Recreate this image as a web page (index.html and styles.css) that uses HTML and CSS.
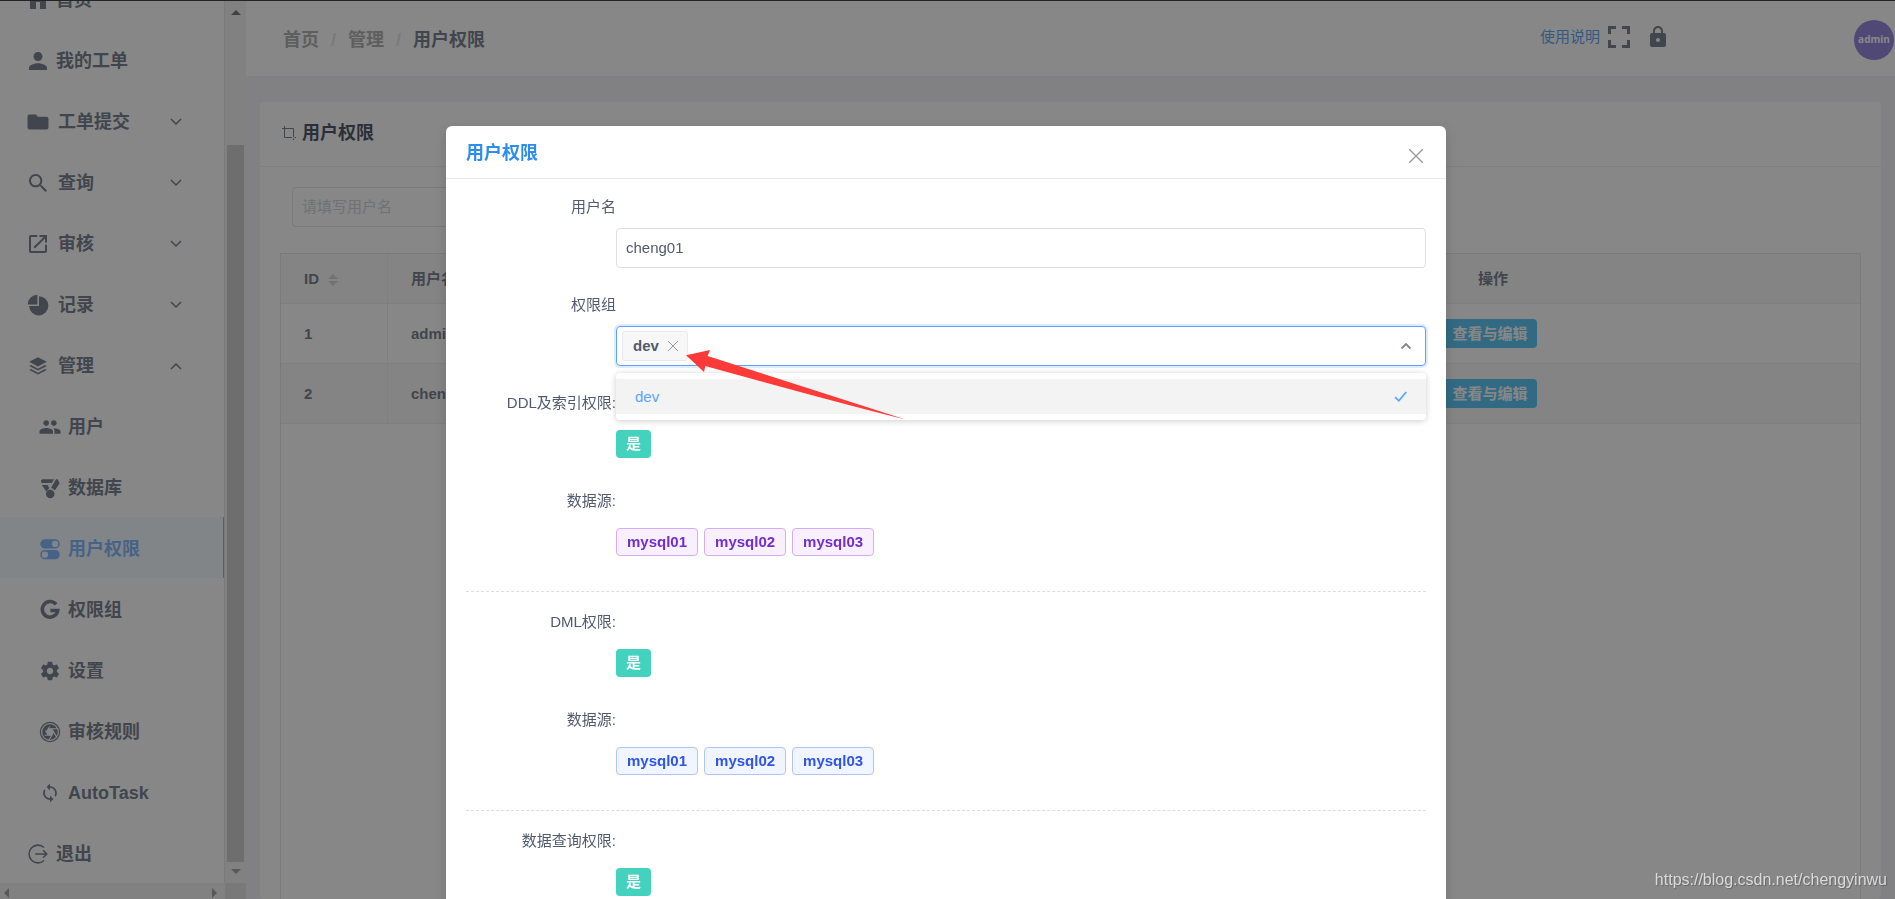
FILE: index.html
```html
<!DOCTYPE html>
<html lang="zh-CN">
<head>
<meta charset="utf-8">
<title>用户权限</title>
<link rel="stylesheet" href="styles.css">
</head>
<body>
<div class="app">
  <aside class="sidebar">
    <div class="sidebar-view">
      <nav class="menu">
        <a class="item" href="#"><svg viewBox="0 0 24 24"><path d="M10 21v-7h4v7h6v-9h3L12 2 1 12h3v9z"/></svg><span>首页</span></a>
        <a class="item" href="#"><svg viewBox="0 0 512 512"><path d="M256 256c52.805 0 96-43.201 96-96s-43.195-96-96-96-96 43.201-96 96 43.195 96 96 96zm0 48c-63.598 0-192 32.402-192 96v48h384v-48c0-63.598-128.402-96-192-96z"/></svg><span>我的工单</span></a>
        <button class="item group" type="button"><svg viewBox="0 0 512 512"><path d="M213.338 96H74.666C51.197 96 32 115.198 32 138.667v234.666C32 396.802 51.197 416 74.666 416h362.668C460.803 416 480 396.802 480 373.333V186.667C480 163.198 460.803 144 437.334 144H256.006l-42.668-48z"/></svg><span>工单提交</span><svg class="chev" viewBox="0 0 12 12"><path d="M1 3l5 5 5-5"/></svg></button>
        <button class="item group" type="button"><svg viewBox="0 0 512 512"><path d="M337.509 305.372h-17.501l-6.571-5.486c20.791-25.232 33.922-57.054 33.922-93.257C347.358 127.632 283.896 64 205.135 64 127.452 64 64 127.632 64 206.629s63.452 142.628 142.225 142.628c35.011 0 67.831-13.167 92.991-34.008l6.561 5.487v17.551L415.18 448 448 415.086 337.509 305.372zm-131.284 0c-54.702 0-98.463-43.887-98.463-98.743 0-54.858 43.761-98.742 98.463-98.742 54.7 0 98.462 43.884 98.462 98.742 0 54.856-43.762 98.743-98.462 98.743z"/></svg><span>查询</span><svg class="chev" viewBox="0 0 12 12"><path d="M1 3l5 5 5-5"/></svg></button>
        <button class="item group" type="button"><svg viewBox="0 0 512 512"><path d="M405.34 405.332H106.66V106.668H240V64H106.66C83.191 64 64 83.197 64 106.668v298.664C64 428.803 83.191 448 106.66 448h298.68c23.469 0 42.66-19.197 42.66-42.668V272h-42.66v133.332zM288 64v42.668h87.474L159.999 322.133l29.866 29.866 215.476-215.47V224H448V64H288z"/></svg><span>审核</span><svg class="chev" viewBox="0 0 12 12"><path d="M1 3l5 5 5-5"/></svg></button>
        <button class="item group" type="button"><svg viewBox="0 0 24 24"><path d="M13 3.200A9.600 9.600 0 1 1 3.200 13H13z"/><path d="M11.400 1.800v9.600H1.800a9.600 9.600 0 0 1 9.600-9.600z"/></svg><span>记录</span><svg class="chev" viewBox="0 0 12 12"><path d="M1 3l5 5 5-5"/></svg></button>
        <button class="item group" type="button"><svg viewBox="-1 -1 26 26"><path d="M12 2.500L2.500 7.500l9.500 5 9.500-5z"/><path d="M2.500 12l2-1.100L12 14.900l7.500-4 2 1.100-9.500 5zM2.500 16.300l2-1.100 7.500 4 7.500-4 2 1.100-9.500 5z"/></svg><span>管理</span><svg class="chev" viewBox="0 0 12 12"><path d="M1 9l5-5 5 5"/></svg></button>
        <a class="item sub" href="#"><svg viewBox="0 0 512 512"><path d="M337.454 232c33.599 0 61.092-27.002 61.092-60 0-32.997-27.493-60-61.092-60s-61.090 27.003-61.090 60c0 32.998 27.491 60 61.090 60zm-162.908 0c33.599 0 61.090-27.002 61.090-60 0-32.997-27.491-60-61.090-60s-61.092 27.003-61.092 60c0 32.998 27.493 60 61.092 60zm0 44C126.688 276 32 298.998 32 346v54h288v-54c0-47.002-97.599-70-145.454-70zm162.908 11.003c-6.105 0-10.325 0-17.454.997 23.426 17.002 32 28 32 58v54h128v-54c0-47.002-94.688-58.997-142.546-58.997z"/></svg><span>用户</span></a>
        <a class="item sub" href="#"><svg viewBox="-1 -1 26 26"><path d="M3.800 2.600h12.700l-2.600 4H3c-1.300-1.300-.8-3.700.8-4zM18.400 2.600h2l2 4.200-5 7.600-4.200-2.600zM3 8.800h6.600l1.600 3.200-3 4z"/><circle cx="12.300" cy="18.400" r="4.600"/></svg><span>数据库</span></a>
        <a class="item sub active" href="#"><svg viewBox="-1 -1 26 26"><path fill-rule="evenodd" d="M6.500 1.500h11a5 5 0 0 1 0 10h-11a5 5 0 0 1 0-10zm11 1.600a3.400 3.400 0 1 0 0 6.800 3.400 3.400 0 0 0 0-6.800zM6.500 13.100h11a5 5 0 0 1 0 10h-11a5 5 0 0 1 0-10zm0 1.600a3.400 3.400 0 1 0 0 6.800 3.400 3.400 0 0 0 0-6.800z"/></svg><span>用户权限</span></a>
        <a class="item sub" href="#"><svg class="line" viewBox="-1 -1 26 26"><path d="M18.600 6A8.400 8.400 0 1 0 20.400 12.500h-8" stroke-width="3.800"/></svg><span>权限组</span></a>
        <a class="item sub" href="#"><svg viewBox="-1 -1 26 26"><path d="M19.430 12.980c.04-.32.07-.64.07-.98s-.03-.66-.07-.98l2.110-1.650c.19-.15.24-.42.12-.64l-2-3.460c-.12-.22-.39-.3-.61-.22l-2.490 1c-.52-.4-1.080-.73-1.690-.98l-.38-2.650C14.460 2.180 14.250 2 14 2h-4c-.25 0-.46.18-.49.42l-.38 2.650c-.61.25-1.170.59-1.690.98l-2.490-1c-.23-.09-.49 0-.61.22l-2 3.460c-.13.22-.07.49.12.64l2.110 1.650c-.04.32-.07.65-.07.98s.03.66.07.98l-2.110 1.650c-.19.15-.24.42-.12.64l2 3.460c.12.22.39.3.61.22l2.490-1c.52.4 1.080.73 1.690.98l.38 2.650c.03.24.24.42.49.42h4c.25 0 .46-.18.49-.42l.38-2.650c.61-.25 1.170-.59 1.690-.98l2.490 1c.23.09.49 0 .61-.22l2-3.460c.12-.22.07-.49-.12-.64l-2.110-1.650zM12 15.500c-1.930 0-3.500-1.570-3.500-3.500s1.570-3.500 3.500-3.500 3.500 1.570 3.500 3.500-1.570 3.500-3.500 3.500z"/></svg><span>设置</span></a>
        <a class="item sub" href="#"><svg viewBox="-1 -1 26 26"><circle cx="12" cy="12" r="10.400" fill="none" stroke="currentColor" stroke-width="1.300"/><circle cx="12" cy="12" r="8.400"/><path class="cut-fill" d="M16 12l-2 3.460h-4L8 12l2-3.460h4z"/><path class="cut" d="M10 8.540h11M14 8.540L19.500 18.070M16 12L10.500 21.530M14 15.460H3M10 15.460L4.500 5.930M8 12l5.500-9.530"/></svg><span>审核规则</span></a>
        <a class="item sub" href="#"><svg viewBox="-2 -2 28 28"><path d="M12 4V1L8 5l4 4V6c3.310 0 6 2.690 6 6 0 1.010-.25 1.970-.7 2.800l1.460 1.460C19.540 15.030 20 13.570 20 12c0-4.420-3.580-8-8-8zm0 14c-3.310 0-6-2.690-6-6 0-1.010.25-1.970.7-2.800L5.240 7.740C4.460 8.970 4 10.430 4 12c0 4.420 3.580 8 8 8v3l4-4-4-4v3z"/></svg><span>AutoTask</span></a>
        <a class="item" href="#"><svg class="line" viewBox="-1 -1 26 26"><path d="M18.500 5A9.600 9.600 0 1 0 18.500 19M9 12h12.500M17.500 8l4 4-4 4" stroke-width="1.700"/></svg><span>退出</span></a>
      </nav>
    </div>
    <div class="vbar"><i class="arr up"></i><i class="thumb"></i><i class="arr down"></i></div>
    <div class="hbar"><i class="arr left"></i><i class="arr right"></i></div>
    <div class="corner"></div>
  </aside>

  <main class="main">
    <header class="topbar">
      <nav class="crumbs"><a href="#">首页</a><i>/</i><a href="#">管理</a><i>/</i><span>用户权限</span></nav>
      <div class="tools">
        <a href="#">使用说明</a>
        <button type="button" aria-label="全屏"><svg viewBox="0 0 24 24"><path d="M1 1h8v3H4v5H1zM15 1h8v8h-3V4h-5zM1 15h3v5h5v3H1zM20 15h3v8h-8v-3h5z"/></svg></button>
        <button type="button" aria-label="锁屏"><svg class="lock" viewBox="0 0 24 24"><path d="M18 8h-1V6c0-2.760-2.240-5-5-5S7 3.240 7 6v2H6c-1.100 0-2 .9-2 2v10c0 1.100.9 2 2 2h12c1.100 0 2-.9 2-2V10c0-1.100-.9-2-2-2zm-6 9c-1.100 0-2-.9-2-2s.9-2 2-2 2 .9 2 2-.9 2-2 2zm3.100-9H8.900V6c0-1.710 1.390-3.100 3.100-3.100s3.100 1.390 3.100 3.100v2z"/></svg></button>
      </div>
      <span class="avatar">admin</span>
    </header>
    <section class="card">
      <h2><svg viewBox="0 0 14 14"><path d="M0 2.500h11.500V11M2.500 0v11.500H10M11.500 12.500V14M12.500 11.500H14"/></svg>用户权限</h2>
      <div class="card-body">
        <input class="search" type="text" placeholder="请填写用户名" aria-label="用户名搜索">
        <div class="table-box">
          <table>
            <colgroup><col class="c-id"><col><col class="c-act"></colgroup>
            <thead><tr><th>ID <span class="sort"><i class="arr up"></i><i class="arr down"></i></span></th><th>用户名</th><th class="act">操作</th></tr></thead>
            <tbody>
              <tr><td>1</td><td>admin</td><td class="act"><button type="button">查看与编辑</button></td></tr>
              <tr class="even"><td>2</td><td>cheng01</td><td class="act"><button type="button">查看与编辑</button></td></tr>
            </tbody>
          </table>
        </div>
      </div>
    </section>
  </main>
</div>

<div class="mask">
  <div class="modal" role="dialog" aria-labelledby="dlg-title">
    <header class="modal-head">
      <h3 id="dlg-title">用户权限</h3>
      <button type="button" aria-label="关闭"><svg viewBox="0 0 14 14"><path d="M0 0l14 14M14 0L0 14"/></svg></button>
    </header>
    <form class="modal-body">
      <div class="field"><label for="uname">用户名</label><div class="ctl"><input id="uname" type="text" value="cheng01"></div></div>
      <div class="field"><label for="grp">权限组</label>
        <div class="ctl">
          <div class="select">
            <span class="chip">dev<button type="button" aria-label="移除 dev"><svg viewBox="0 0 10 10"><path d="M0 0l10 10M10 0L0 10"/></svg></button></span>
            <input id="grp" type="text" role="combobox" aria-expanded="true" aria-controls="grp-list">
            <svg class="caret" viewBox="0 0 12 12"><path d="M1.500 8.500L6 4l4.500 4.500"/></svg>
            <div class="dropdown" id="grp-list" role="listbox">
              <div class="option" role="option" aria-selected="true">dev<svg viewBox="0 0 12 12"><path d="M1 6.500l3.500 3.500L11.300 1.800"/></svg></div>
            </div>
            <svg class="pointer" viewBox="0 0 220 70"><path d="M0 5.300L24 0l-2.400 6L219.500 69.500Q160 55 19.300 16l-1.300 6z"/></svg>
          </div>
        </div>
      </div>
      <div class="field"><span class="label">DDL及索引权限:</span><div class="ctl"><span class="yes">是</span></div></div>
      <div class="field"><span class="label">数据源:</span><div class="ctl"><span class="tag purple">mysql01</span><span class="tag purple">mysql02</span><span class="tag purple">mysql03</span></div></div>
      <hr>
      <div class="field"><span class="label">DML权限:</span><div class="ctl"><span class="yes">是</span></div></div>
      <div class="field"><span class="label">数据源:</span><div class="ctl"><span class="tag blue">mysql01</span><span class="tag blue">mysql02</span><span class="tag blue">mysql03</span></div></div>
      <hr>
      <div class="field"><span class="label">数据查询权限:</span><div class="ctl"><span class="yes">是</span></div></div>
    </form>
  </div>
</div>
<div class="watermark">https://blog.csdn.net/chengyinwu</div>
</body>
</html>
```
FILE: styles.css
```css
* { box-sizing: border-box; }
html, body { height: 100%; margin: 0; overflow: hidden; }
body {
  border-top: 1px solid #242328;
  font: 15px/24px "Liberation Sans", "Noto Sans CJK SC", sans-serif;
  color: #515a6e;
  background: #f0f0f6;
}
a { color: inherit; text-decoration: none; }
button { font: inherit; color: inherit; background: none; border: 0; padding: 0; cursor: pointer; }
svg { fill: currentColor; flex: none; display: block; }
i { font-style: normal; }
.line, .chev, h2 svg, .modal-head svg, .chip svg, .caret, .option svg { fill: none; stroke: currentColor; }

.app { display: flex; height: 100%; }
.sidebar {
  flex: none;
  display: grid;
  grid-template: minmax(0, 1fr) 16px / 225px 21px;
  height: 100%;
}
.sidebar-view { overflow: hidden; background: #fff; border-right: 1px solid #dcdee2; }
.menu { display: flex; flex-direction: column; margin: -33px -1px 0 0; }
.item {
  flex: none;
  display: flex;
  align-items: center;
  gap: 6px;
  height: 61px;
  padding: 2px 43px 0 26px;
  font-size: 18px;
  font-weight: bold;
  text-align: left;
}
.item svg { width: 24px; height: 24px; }
.group { gap: 8px; }
.item .chev { width: 12px; height: 12px; margin-left: auto; stroke-width: 1.5; }
.sub { padding-left: 38px; }
.cut-fill { fill: #fff; }
.cut { fill: none; stroke: #fff; stroke-width: 1.2; clip-path: circle(9px at 12px 12px); }
.active { color: #5ca2ff; background: #f0faff; border-right: 2px solid #5ca2ff; }
.vbar { background: #f1f1f1; display: flex; flex-direction: column; align-items: center; padding: 9px 0; }
.thumb { flex: 1; width: 17px; background: #c1c1c1; margin: 130px 0 7px; }
.arr { width: 0; height: 0; border: 5px solid transparent; flex: none; }
.arr.up { border-top: 0; border-bottom-color: #505050; }
.arr.down { border-bottom: 0; border-top-color: #8a8a8a; }
.arr.left { border-left: 0; border-right-color: #8a8a8a; }
.arr.right { border-right: 0; border-left-color: #8a8a8a; }
.hbar { background: #f1f1f1; display: flex; align-items: center; justify-content: space-between; padding: 4px 8px 0 4px; }
.corner { background: #dcdcdc; }

.main { flex: 1; min-width: 0; display: flex; flex-direction: column; }
.topbar { flex: none; height: 75px; background: #fff; display: flex; align-items: center; padding: 2px 1px 0 37px; }
.crumbs { display: flex; font-size: 18px; font-weight: bold; }
.crumbs a { color: #999; }
.crumbs i { width: 29px; text-align: center; color: #dcdee2; }
.tools { display: flex; align-items: center; gap: 7px; margin: 0 184px 5px auto; }
.tools a { color: #2d8cf0; }
.tools svg { width: 24px; height: 24px; }
.tools button + button { margin-left: 8px; }
.tools .lock { width: 24px; height: 24px; }
.avatar {
  width: 40px; height: 40px; border-radius: 50%;
  background: #7865d3; color: #fff;
  font: bold 10px/38px "Open Sans", sans-serif;
  text-align: center;
}
.card { flex: 1; margin: 26px 14px 0; background: #fff; border-radius: 4px; display: flex; flex-direction: column; }
.card h2 {
  flex: none;
  margin: 0; height: 65px; padding: 0 22px 2px;
  display: flex; align-items: center; gap: 6px;
  font-size: 18px; color: #17233d; border-bottom: 1px solid #e8eaec;
}
.card h2 svg { width: 14px; height: 14px; color: #515a6e; }
.card-body { flex: 1; padding: 20px 20px 0; display: flex; flex-direction: column; gap: 26px; }
input {
  height: 40px; width: 100%; padding: 0 9px 2px;
  border: 1px solid #dcdee2; border-radius: 4px; outline: 0;
  font: inherit; color: inherit; background: #fff;
}
.search { width: 240px; margin-left: 12px; }
.search::placeholder { color: #c5c8ce; }
.table-box { flex: 1; border: 1px solid #dcdee2; border-bottom: 0; }
table { width: 100%; border-collapse: separate; border-spacing: 0; table-layout: fixed; font-weight: bold; }
.c-id { width: 107px; }
.c-act { width: 734px; }
th, td { height: 60px; padding: 0 23px; text-align: left; border-bottom: 1px solid #e8eaec; }
th { height: 50px; background: #f8f8f9; }
th:first-child, td:first-child { border-right: 1px solid #e8eaec; }
.even td { background: #f8f8f9; }
.sort { display: inline-flex; flex-direction: column; gap: 2px; margin-left: 5px; vertical-align: middle; }
.sort .arr.up { border-bottom-color: #c5c8ce; }
.sort .arr.down { border-top-color: #c5c8ce; }
th.act, td.act { text-align: center; padding: 0; }
td.act { padding-right: 6px; }
.act button { display: block; margin: 0 auto; height: 29px; padding: 0 9px; border-radius: 4px; background: #2db7f5; color: #fff; }

.mask { position: fixed; inset: 1px 0 0; background: rgba(55, 55, 55, .6); padding: 125px 3px 0 0; }
.modal { width: 1000px; max-width: 100%; margin: 0 auto; background: #fff; border-radius: 6px; box-shadow: 0 4px 12px rgba(0, 0, 0, .15); }
.modal-head { display: flex; justify-content: space-between; padding: 15px 20px 0; height: 53px; border-bottom: 1px solid #e8eaec; }
.modal-head h3 { margin: 0; font-size: 18px; color: #2d8cf0; }
.modal-head button { padding: 8px 3px 0; align-self: flex-start; color: #999; }
.modal-head svg { width: 14px; height: 14px; stroke-width: 1.3; }
.modal-body { padding: 7px 20px 16px; }
.field { margin-bottom: 16px; }
.field label, .label { display: block; width: 150px; line-height: 42px; text-align: right; }
.ctl { margin-left: 150px; height: 40px; display: flex; align-items: center; gap: 6px; }
.yes { background: #42d2bd; color: #fff; font-weight: bold; line-height: 28px; padding: 0 10px; border-radius: 4px; }
.tag { border: 1px solid; border-radius: 4px; font-weight: bold; line-height: 26px; padding: 0 10px; }
.purple { color: #722ed1; background: #f9f0ff; border-color: #d3adf7; }
.blue { color: #2f54eb; background: #f0f5ff; border-color: #adc6ff; }
hr { margin: 29px 0 9px; border: 0; border-top: 1px dashed #dcdee2; }
.select {
  position: relative; flex: 1; height: 40px;
  display: flex; align-items: center; padding: 0 13px 0 5px;
  border: 1px solid #5ca2ff; border-radius: 4px;
  box-shadow: 0 0 0 2px rgba(92, 162, 255, .2);
}
.select input { flex: 1; width: auto; height: 30px; border: 0; }
.chip {
  display: flex; align-items: center; gap: 9px;
  height: 30px; padding: 0 9px 0 10px;
  background: #f7f7f7; border: 1px solid #e8eaec; border-radius: 3px; font-weight: bold;
}
.chip svg { width: 10px; height: 10px; color: #999; }
.caret { width: 12px; height: 12px; color: #808695; stroke-width: 1.8; }
.dropdown {
  position: absolute; top: 46px; left: -1px; right: -1px; z-index: 2;
  padding: 6px 0; background: #fff; border-radius: 4px; box-shadow: 0 1px 6px rgba(0, 0, 0, .2);
}
.option {
  display: flex; align-items: center; justify-content: space-between;
  height: 35px; padding: 0 19px; background: #f3f3f3; color: #5ca2ff;
}
.option svg { width: 13px; height: 13px; stroke-width: 1.6; }
.pointer { position: absolute; z-index: 3; left: 69px; top: 23px; width: 220px; height: 70px; color: #fc3a38; }
.watermark {
  position: fixed; right: 8px; bottom: 7px;
  font-size: 16px; color: #dadada; text-shadow: 1px 1px 1px rgba(0, 0, 0, .25);
}
```
